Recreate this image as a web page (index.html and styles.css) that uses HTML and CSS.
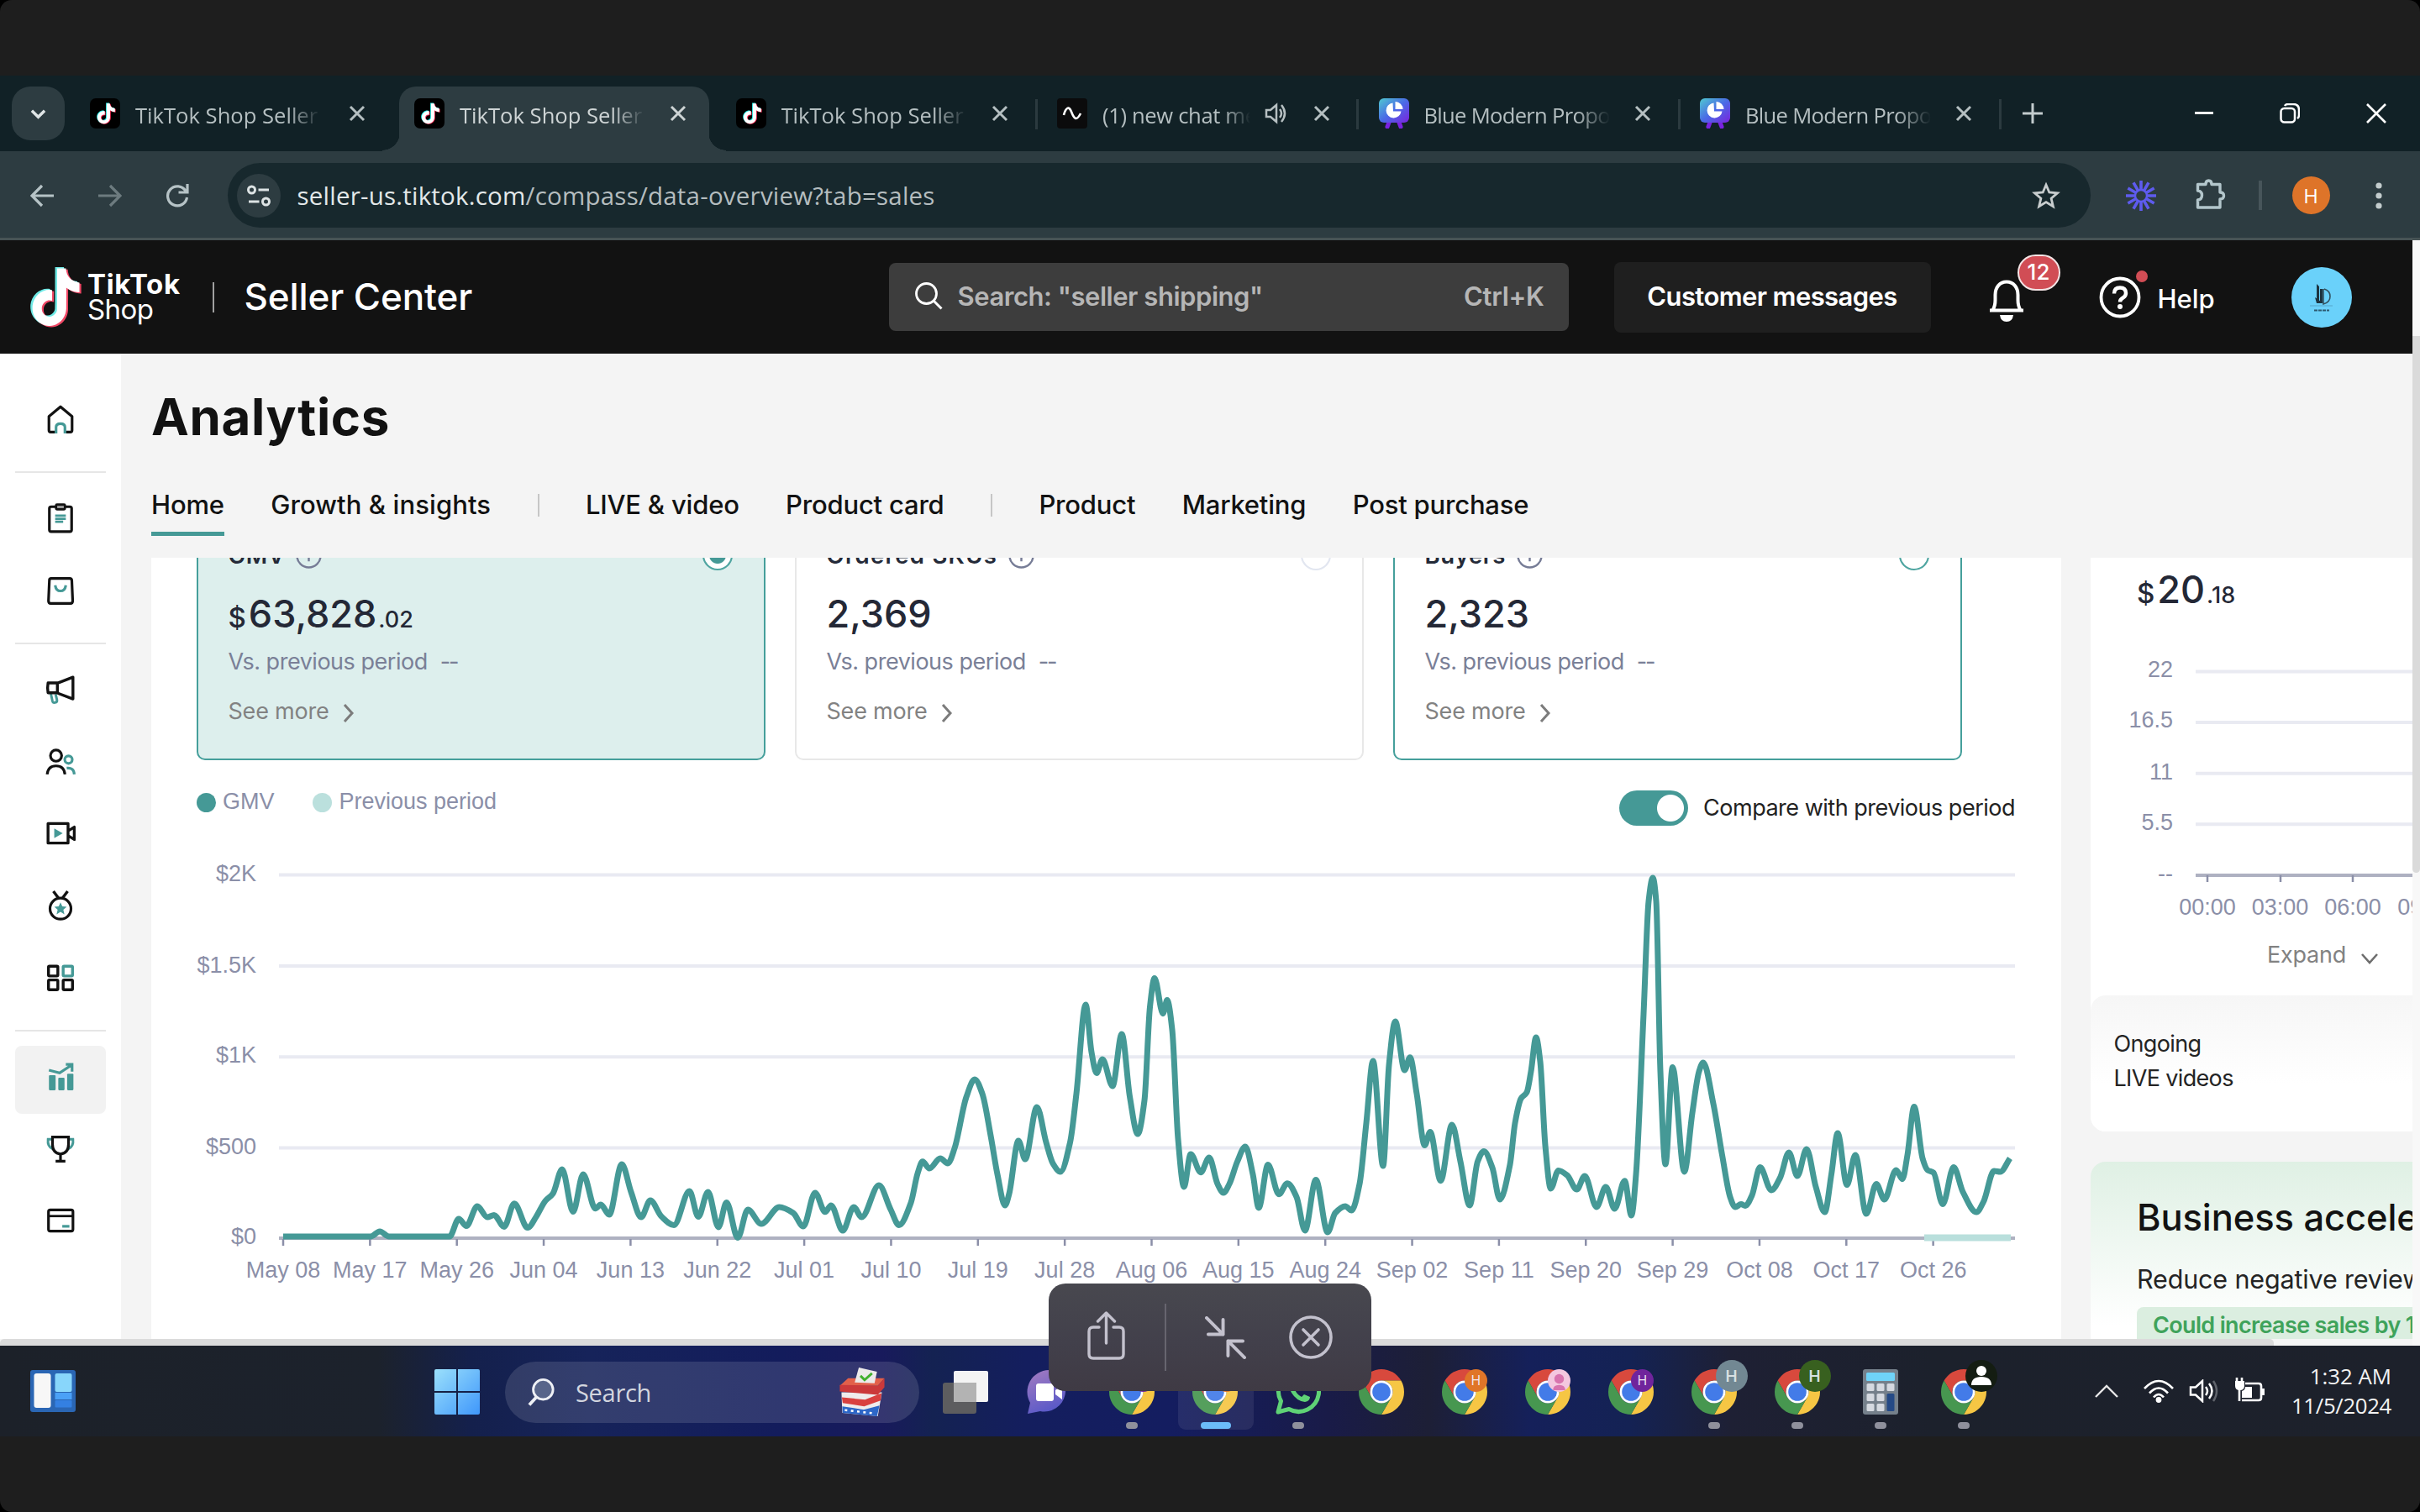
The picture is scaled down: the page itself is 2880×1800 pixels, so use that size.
FILE: index.html
```html
<!DOCTYPE html>
<html lang="en">
<head>
<meta charset="utf-8">
<title>TikTok Shop Seller Center</title>
<link rel="stylesheet" href="styles.css">
</head>
<body>
<svg class="defs" aria-hidden="true">
  <defs>
    <path id="note" d="M12.525.02c1.31-.02 2.61-.01 3.91-.02.08 1.53.63 3.09 1.75 4.17 1.12 1.11 2.7 1.62 4.24 1.79v4.03c-1.44-.05-2.89-.35-4.2-.97-.57-.26-1.1-.59-1.62-.93-.01 2.92.01 5.84-.02 8.75-.08 1.4-.54 2.79-1.35 3.94-1.31 1.92-3.58 3.17-5.91 3.21-1.43.08-2.86-.31-4.08-1.03-2.02-1.19-3.44-3.37-3.65-5.71-.02-.5-.03-1-.01-1.49.18-1.9 1.12-3.72 2.58-4.96 1.66-1.44 3.98-2.13 6.15-1.72.02 1.48-.04 2.96-.04 4.44-.99-.32-2.15-.23-3.02.37-.63.41-1.11 1.04-1.36 1.75-.21.51-.15 1.07-.14 1.61.24 1.64 1.82 3.02 3.5 2.87 1.12-.01 2.19-.66 2.77-1.61.19-.33.4-.67.41-1.06.1-1.79.06-3.57.07-5.36.01-4.03-.01-8.05.02-12.07z"/>
    <symbol id="fav-tiktok" viewBox="0 0 36 36"><rect width="36" height="36" rx="7" fill="#000"/><g transform="translate(6.6 5.6)"><use href="#note" fill="#25f4ee"/><use href="#note" fill="#fe2c55" x="1.600" y="1.200"/><use href="#note" fill="#fff" x=".8" y=".6"/></g></symbol>
    <linearGradient id="gc" x1="0" y1="0" x2="1" y2="1"><stop offset="0" stop-color="#4fc9d0"/><stop offset=".5" stop-color="#4a6be6"/><stop offset="1" stop-color="#7b22dd"/></linearGradient>
    <symbol id="fav-canva" viewBox="0 0 36 36"><path d="M10 34l3-8M26 34l-3-8" stroke="#7a22e0" stroke-width="5" stroke-linecap="round"/><rect width="36" height="29" rx="6" fill="url(#gc)"/><path d="M16.500 5.500A9 9 0 1 0 26.500 15.500H17z" fill="#fff"/><path d="M19.500 4A9 9 0 0 1 28.500 13H19.500z" fill="#fff"/></symbol>
    <symbol id="x" viewBox="0 0 20 20"><path d="M2 2l16 16M18 2L2 18" stroke="currentColor" stroke-width="3"/></symbol>
    <symbol id="chrome" viewBox="0 0 48 48"><path fill="#d8493d" d="M24 12H44.780A24 24 0 0 0 3.220 12L13.600 30A12 12 0 0 1 24 12z"/><path fill="#f6c644" d="M34.390 30L24 48A24 24 0 0 0 44.780 12H24A12 12 0 0 1 34.390 30z"/><path fill="#479750" d="M13.600 30L3.220 12A24 24 0 0 0 24 48L34.390 30A12 12 0 0 1 13.600 30z"/><circle cx="24" cy="24" r="12" fill="#fff"/><circle cx="24" cy="24" r="9.600" fill="#437be8"/></symbol>
    <symbol id="info" viewBox="0 0 32 32"><circle cx="16" cy="16" r="14.500" fill="none" stroke="#767c96" stroke-width="2.500"/><path d="M16 8v3.500M16 14v9" stroke="#767c96" stroke-width="2.500"/></symbol>
    <symbol id="more" viewBox="0 0 14 24"><path d="M2 2l9 10-9 10" fill="none" stroke="#7c7c7c" stroke-width="3"/></symbol>
  </defs>
</svg>
<div class="frame">
  <div class="browser">
    <div class="tabstrip">
      <button class="tab-search"><svg viewBox="0 0 20 12" width="19" height="13"><path d="M2 2l8 8 8-8" fill="none" stroke="#dfe5e6" stroke-width="3.600"/></svg></button>
      <div class="tab first"><svg class="fav"><use href="#fav-tiktok"/></svg><span class="title">TikTok Shop Seller C</span><svg class="close"><use href="#x"/></svg></div>
      <div class="tab active"><svg class="fav"><use href="#fav-tiktok"/></svg><span class="title">TikTok Shop Seller</span><svg class="close"><use href="#x"/></svg></div>
      <div class="tab"><svg class="fav"><use href="#fav-tiktok"/></svg><span class="title">TikTok Shop Seller</span><svg class="close"><use href="#x"/></svg><i class="sep"></i></div>
      <div class="tab"><svg class="fav" viewBox="0 0 36 36"><rect width="36" height="36" rx="4" fill="#0b0b0c"/><path d="M8 20c2-8 6-12 9-4s6 12 11 2" fill="none" stroke="#fff" stroke-width="2.600"/></svg><span class="title short">(1) new chat mes</span><svg class="sound" viewBox="0 0 28 26"><path d="M2 9h5l7-6v20l-7-6H2zM18 8q4 5 0 10M20 3q8 10 0 20" fill="none" stroke="#b6bfc1" stroke-width="2.500"/></svg><svg class="close"><use href="#x"/></svg><i class="sep"></i></div>
      <div class="tab"><svg class="fav"><use href="#fav-canva"/></svg><span class="title canva">Blue Modern Propos</span><svg class="close"><use href="#x"/></svg><i class="sep"></i></div>
      <div class="tab"><svg class="fav"><use href="#fav-canva"/></svg><span class="title canva">Blue Modern Propos</span><svg class="close"><use href="#x"/></svg><i class="sep"></i></div>
      <svg class="newtab" viewBox="0 0 24 24"><path d="M12 0v24M0 12h24" stroke="#c3cccd" stroke-width="3"/></svg>
      <div class="window-controls">
        <svg viewBox="0 0 24 24"><path d="M1 11.500h22" stroke="#fff" stroke-width="3"/></svg>
        <svg viewBox="0 0 24 24"><rect x="1.500" y="6" width="16.500" height="16.500" rx="4" fill="none" stroke="#fff" stroke-width="2.500"/><path d="M6 3q1-2 4-2h6q7 0 7 7v6q0 3-2 4" fill="none" stroke="#fff" stroke-width="2.500"/></svg>
        <svg viewBox="0 0 24 24"><path d="M1 1l22 22M23 1L1 23" stroke="#fff" stroke-width="2.600"/></svg>
      </div>
    </div>
    <div class="toolbar">
      <svg class="nav-ico" viewBox="0 0 28 28"><path d="M28 14H3M14 2L2 14l12 12" fill="none" stroke="#b6c3c6" stroke-width="3.200"/></svg>
      <svg class="nav-ico" viewBox="0 0 28 28"><path d="M0 14h25M14 2l12 12-12 12" fill="none" stroke="#6d7b7f" stroke-width="3.200"/></svg>
      <svg class="nav-ico" viewBox="0 0 28 28"><path d="M24 8.500A11.500 11.500 0 1 0 25.500 16M26 0v10H15.500" fill="none" stroke="#b6c3c6" stroke-width="3.200"/></svg>
      <div class="omnibox">
        <span class="site-info"><svg viewBox="0 0 28 28" width="28" height="28"><g fill="none" stroke="#dde3e4" stroke-width="3"><circle cx="5.500" cy="7" r="4"/><path d="M13.500 7H26"/><circle cx="22.500" cy="21" r="4"/><path d="M2 21h12.500"/></g></svg></span>
        <span class="url">seller-us.tiktok.com<span class="path">/compass/data-overview?tab=sales</span></span>
        <svg class="star" viewBox="0 0 34 34"><path d="M17 4l3.800 9 9.700.8-7.400 6.400 2.300 9.500L17 24.600l-8.400 5.100 2.300-9.500-7.400-6.400 9.700-.8z" fill="none" stroke="#c8cdce" stroke-width="2.800"/></svg>
      </div>
      <svg class="burst" viewBox="-18 -18 36 36"><g stroke="#5e5bee" stroke-width="3.600"><path d="M0-18V18M-18 0H18M-9-15.600L9 15.600M9-15.600L-9 15.600M-15.600-9L15.600 9M15.600-9L-15.600 9"/></g><circle r="7" fill="#2d3c41" stroke="#5e5bee" stroke-width="2.400"/></svg>
      <svg class="puzzle" viewBox="0 0 38 38"><path d="M3.500 7.500h9.500q0-4.500 3.500-4.500t3.500 4.500h10v9.500q4.500 0 4.500 4t-4.500 4v10H3.500v-9q5-.5 5-5.500t-5-5.500z" fill="none" stroke="#b3c6cb" stroke-width="3.400" stroke-linejoin="round"/></svg>
      <i class="tb-sep"></i>
      <span class="profile">H</span>
      <svg class="dots" viewBox="0 0 8 32"><g fill="#c3cccd"><circle cx="4" cy="4" r="3.600"/><circle cx="4" cy="16" r="3.600"/><circle cx="4" cy="28" r="3.600"/></g></svg>
    </div>
    <div class="page">
      <div class="viewport">
        <header class="topbar">
          <svg class="tt-logo" viewBox="0 0 61 71"><g transform="translate(-4 0) scale(2.680 2.860)"><use href="#note" fill="#6ee9e5"/><use href="#note" fill="#f04866" x="1.700" y="1"/><use href="#note" fill="#fff" x=".9" y=".5"/></g></svg>
          <div class="tt-word"><b>TikTok</b><span>Shop</span></div>
          <i class="brand-sep"></i>
          <span class="brand">Seller Center</span>
          <div class="search">
            <svg viewBox="0 0 34 34" width="34" height="34"><circle cx="14.500" cy="14.500" r="12" fill="none" stroke="#fff" stroke-width="2.800"/><path d="M23 23l9.500 9.500" stroke="#fff" stroke-width="3"/></svg>
            <span class="ph">Search: "seller shipping"</span><span class="kbd">Ctrl+K</span>
          </div>
          <span class="messages">Customer messages</span>
          <div class="bell"><svg viewBox="0 0 46 52" width="46" height="52"><path d="M3 37.500h40M6.500 37c2-3 3-6 3-12v-6c0-9 5.500-15.500 13.500-15.500S36.500 10 36.500 19v6c0 6 1 9 3 12" fill="none" stroke="#fff" stroke-width="4"/><path d="M15 43h16q-1 8-8 8t-8-8z" fill="#fff"/></svg><span class="badge">12</span></div>
          <div class="help"><svg viewBox="0 0 50 50" width="50" height="50"><circle cx="25" cy="25" r="22.500" fill="none" stroke="#fff" stroke-width="3.800"/><path d="M18 20.500q0-7 7-7t7 6.500q0 3.500-3.500 5.500-3.500 2-3.500 5" fill="none" stroke="#fff" stroke-width="4.400"/><circle cx="25" cy="36" r="3" fill="#fff"/></svg><i class="reddot"></i><span>Help</span></div>
          <svg class="avatar" viewBox="0 0 72 72"><circle cx="36" cy="36" r="36" fill="#6ad1fa"/><path d="M30 20l3 3v20l-3-2zM34 26h3v16h-3zM28 36l10 7-8 0z" fill="#1d3440"/><path d="M39 26q7 2 7 9t-8 9V26" fill="none" stroke="#33515f" stroke-width="1.600"/><path d="M22 46h27" stroke="#5aaed2" stroke-width="1.200"/><path d="M27 51.500h18" stroke="#2c5a70" stroke-width="1.800" stroke-dasharray="4 1"/></svg>
        </header>
        <div class="body">
          <aside class="sidebar">
            <div class="item home"><svg viewBox="0 0 34 34"><path d="M4 14v15.500q0 2 2 2h22q2 0 2-2V14L17 3z" fill="none" stroke="#121212" stroke-width="3" stroke-linejoin="round"/><path d="M12 33v-7q0-4 5-4t5 4v7" fill="#fff" stroke="#459996" stroke-width="3"/></svg></div>
            <hr>
            <div class="item"><svg viewBox="0 0 34 34"><rect x="4.500" y="4" width="25" height="28" rx="2" fill="none" stroke="#121212" stroke-width="3"/><rect x="12" y="1.500" width="10" height="5.500" rx="1" fill="#9a9a9a" stroke="#121212" stroke-width="2.600"/><path d="M11 14h12M11 17.500h12M11 21h9" stroke="#459996" stroke-width="2.600"/></svg></div>
            <div class="item"><svg viewBox="0 0 34 34"><path d="M6.500 3.500h21q2 0 2.200 2l1 23q0 3-2.500 3H6q-2.500 0-2.500-3l1-23q0-2 2-2z" fill="none" stroke="#121212" stroke-width="3"/><path d="M11 11q1 6.500 6 6.500t6-6.500" fill="none" stroke="#459996" stroke-width="3"/></svg></div>
            <hr>
            <div class="item"><svg viewBox="0 0 34 34"><path d="M6 21l2 9q.5 2 3 1.500t2-3L11.500 22" fill="none" stroke="#459996" stroke-width="2.800"/><path d="M3 9.500h10.500v11H3q-1-5.500 0-11zM14 9.500L31 3v24.500L14 21" fill="none" stroke="#121212" stroke-width="3.200" stroke-linejoin="round"/></svg></div>
            <div class="item"><svg viewBox="0 0 34 34"><g fill="none" stroke-width="3"><circle cx="26" cy="14.500" r="4.200" stroke="#459996"/><path d="M24 24q8-1 8.500 7" stroke="#459996"/><circle cx="12" cy="10" r="6.300" stroke="#121212"/><path d="M2 31q1-9.500 10-9.500T22 31" stroke="#121212"/></g></svg></div>
            <div class="item"><svg viewBox="0 0 34 34"><path d="M3 6h22.500v22H3zM26 14l6.500-4v14L26 20" fill="none" stroke="#121212" stroke-width="3.200" stroke-linejoin="round"/><path d="M10 11.500l9.500 5.500-9.500 5.500z" fill="#459996"/></svg></div>
            <div class="item"><svg viewBox="0 0 34 34"><path d="M9 1l6 8M25 1l-6 8" stroke="#121212" stroke-width="3.200"/><circle cx="17" cy="20.500" r="11.800" fill="none" stroke="#121212" stroke-width="3"/><path d="M17 13.500l2 4.500 5 .5-3.800 3.300 1.200 5-4.400-2.600-4.400 2.600 1.200-5-3.800-3.300 5-.5z" fill="#459996"/></svg></div>
            <div class="item"><svg viewBox="0 0 34 34"><g fill="none" stroke="#121212" stroke-width="3.200"><rect x="3.500" y="4" width="10.500" height="11" rx="1"/><rect x="3.500" y="19.500" width="10.500" height="11" rx="1"/><rect x="20" y="19.500" width="10.500" height="11" rx="1"/><rect x="20" y="4" width="10.500" height="11" rx="1" stroke="#459996"/></g></svg></div>
            <hr>
            <div class="item current"><svg viewBox="0 0 34 34"><g fill="#459996"><rect x="4" y="15" width="7.500" height="17" rx="1"/><rect x="14.500" y="18" width="7" height="14" rx="1"/><rect x="24.500" y="13.500" width="7" height="18.500" rx="1"/></g><path d="M4 9.500l12 3L29 4M23 3h7v8" fill="none" stroke="#459996" stroke-width="3"/></svg></div>
            <div class="item"><svg viewBox="0 0 34 34"><path d="M8 6H3q-1 8 5.500 11M26 6h5q1 8-5.500 11" fill="none" stroke="#459996" stroke-width="2.800"/><path d="M8 3.500h18v8q0 10-9 11-9-1-9-11zM17 22.500V30M11.500 30.500h11" fill="none" stroke="#121212" stroke-width="3"/></svg></div>
            <div class="item"><svg viewBox="0 0 34 34"><rect x="3.500" y="5" width="27.500" height="24" rx="2" fill="none" stroke="#121212" stroke-width="3"/><path d="M3 12h28" stroke="#121212" stroke-width="2.600"/><path d="M19 23.500h8" stroke="#459996" stroke-width="3"/></svg></div>
          </aside>
          <main class="main">
            <div class="head">
              <h1>Analytics</h1>
              <nav class="subnav"><a class="on">Home</a><a class="wide">Growth &amp; insights</a><i></i><a>LIVE &amp; video</a><a>Product card</a><i></i><a>Product</a><a>Marketing</a><a>Post purchase</a></nav>
            </div>
            <div class="content">
              <section class="panel">
                <div class="cards">
                  <div class="card selected"><div class="c-title">GMV <svg class="info"><use href="#info"/></svg><b class="radio checked"></b></div><div class="c-value"><span class="cur">$</span>63,828<span class="dec">.02</span></div><div class="c-vs">Vs. previous period<span>--</span></div><div class="c-more">See more<svg><use href="#more"/></svg></div></div>
                  <div class="card"><div class="c-title loose">Ordered SKUs <svg class="info"><use href="#info"/></svg><b class="radio muted"></b></div><div class="c-value">2,369</div><div class="c-vs">Vs. previous period<span>--</span></div><div class="c-more">See more<svg><use href="#more"/></svg></div></div>
                  <div class="card outlined"><div class="c-title">Buyers <svg class="info"><use href="#info"/></svg><b class="radio"></b></div><div class="c-value">2,323</div><div class="c-vs">Vs. previous period<span>--</span></div><div class="c-more">See more<svg><use href="#more"/></svg></div></div>
                </div>
                <div class="legend-row">
                  <div class="legend"><i class="gmv"></i><span>GMV</span><i class="prev"></i><span>Previous period</span></div>
                  <div class="compare"><span class="toggle"></span><span>Compare with previous period</span></div>
                </div>
                <svg class="chart" viewBox="180 989 2273 605">
                  <g stroke="#e9eaf2" stroke-width="4"><path d="M332 1041.500H2398M332 1150H2398M332 1258.300H2398M332 1366.500H2398"/></g>
                  <path d="M332 1474H2398" stroke="#aeb1c1" stroke-width="4"/>
                  <g id="ticks" stroke="#8b8fa8" stroke-width="2.500"></g>
                  <g class="axis y"><text x="305" y="1049">$2K</text><text x="305" y="1158">$1.5K</text><text x="305" y="1265">$1K</text><text x="305" y="1373.500">$500</text><text x="305" y="1481">$0</text></g>
                  <g class="axis x" id="days"></g>
                  <path id="gmv-line" fill="none" stroke="#459996" stroke-width="7" stroke-linejoin="round"/>
                  <path d="M2290 1473.500H2393" stroke="#b9dfdc" stroke-width="8"/>
                </svg>
              </section>
              <section class="side">
                <div class="live">
                  <div class="c-value"><span class="cur">$</span>20<span class="dec">.18</span></div>
                  <svg class="mini" viewBox="2488 760 383 340">
                    <path d="M2613 799.500H2871M2613 860H2871M2613 920.700H2871M2613 981.300H2871" stroke="#e9eaf2" stroke-width="4"/>
                    <path d="M2613 1042H2871" stroke="#aeb1c1" stroke-width="4"/>
                    <path d="M2627 1042v8M2714 1042v8M2800 1042v8" stroke="#8b8fa8" stroke-width="2.500"/>
                    <g class="axis y"><text x="2586" y="806">22</text><text x="2586" y="866">16.5</text><text x="2586" y="928">11</text><text x="2586" y="988">5.5</text><text x="2586" y="1049">--</text></g>
                    <g class="axis x"><text x="2627" y="1089">00:00</text><text x="2713.500" y="1089">03:00</text><text x="2800" y="1089">06:00</text><text x="2887" y="1089">09:00</text></g>
                  </svg>
                  <div class="expand">Expand<svg viewBox="0 0 22 14"><path d="M2 2l9 10 9-10" fill="none" stroke="#6e6e6e" stroke-width="2.600"/></svg></div>
                  <div class="ongoing">Ongoing<br>LIVE videos</div>
                </div>
                <div class="accel">
                  <h2>Business accelerator</h2>
                  <p>Reduce negative reviews</p>
                  <span class="tag">Could increase sales by 1%</span>
                </div>
              </section>
            </div>
          </main>
        </div>
        <div class="hscroll"><i></i></div>
      </div>
      <div class="vscroll"><i></i></div>
    </div>
    <footer class="taskbar">
      <svg class="widgets" viewBox="0 0 54 50"><rect width="54" height="50" rx="3" fill="#2a66b4"/><rect x="4.500" y="4" width="20" height="41" rx="3" fill="#f7f7f7"/><rect x="29.500" y="4" width="20" height="22" rx="2" fill="#88d6fb"/><rect x="29.500" y="27" width="20" height="8" fill="#4ba1f7"/><rect x="29.500" y="36" width="20" height="8.500" rx="1" fill="#3480e2"/></svg>
      <svg class="start" viewBox="0 0 54 54"><defs><linearGradient id="gw" x1="0" y1="0" x2="1" y2="1"><stop offset="0" stop-color="#9be0fb"/><stop offset="1" stop-color="#3f97fb"/></linearGradient></defs><path fill="url(#gw)" d="M2 0h24v26H0V2q0-2 2-2zM28 0h24q2 0 2 2v24H28zM0 28h26v26H2q-2 0-2-2zM28 28h26v24q0 2-2 2H28z"/></svg>
      <div class="tb-search"><svg class="mag" viewBox="0 0 34 36"><circle cx="19.500" cy="14.500" r="12.500" fill="#58658a" stroke="#eef0f5" stroke-width="3"/><path d="M11 24L2 34" stroke="#eef0f5" stroke-width="4"/></svg><span>Search</span>
        <svg class="ballot" viewBox="0 0 54 60"><path d="M2 30h49l-5 29L3 55z" fill="#efecec"/><path d="M2.500 36l28 3 20-8-1 9-20 7-26-4z" fill="#d9403f"/><path d="M3 47l26 4 19-5-3 13L3.500 55z" fill="#2d67c8"/><path d="M6 51.500l35 4" stroke="#fff" stroke-width="2.500" stroke-dasharray="3 4.500"/><path d="M10 13h44l-8 9H0z" fill="#e2604a"/><path d="M0 21l46 1 8-9v11l-8 9-46-4z" fill="#cb393a"/><path d="M23 0l22 5-3 14-24-1z" fill="#eceaea"/><path d="M25 10l5 5 9-8" fill="none" stroke="#41b02f" stroke-width="3"/></svg></div>
      <div class="apps">
        <div class="app"><svg viewBox="0 0 54 54"><rect x="0" y="16" width="40" height="37" rx="3" fill="#5d5d5f"/><rect x="13" y="2" width="41" height="37" rx="2" fill="#f4f4f4"/><rect x="13" y="16" width="27" height="23" fill="#b3b3b3"/></svg></div>
        <div class="app"><svg viewBox="0 0 54 54"><defs><linearGradient id="gch" x1="0" y1="0" x2=".4" y2="1"><stop offset="0" stop-color="#a57cc0"/><stop offset="1" stop-color="#5b5ac8"/></linearGradient></defs><path d="M27 1a25 25 0 1 1-10 49L2 53l3-13A26 26 0 0 1 27 1z" fill="url(#gch)"/><rect x="12" y="17" width="21" height="21" rx="3" fill="#fff"/><path d="M35 25l8-6v17l-8-6z" fill="#fff"/></svg></div>
        <div class="app open"><svg><use href="#chrome"/></svg><b class="acct purple">H</b></div>
        <div class="app open focus"><svg><use href="#chrome"/></svg><b class="acct orange">H</b></div>
        <div class="app open"><svg viewBox="0 0 54 54"><path d="M3 51l3.500-13A24 24 0 1 1 16 47.500z" fill="none" stroke="#5fd276" stroke-width="5" stroke-linejoin="round"/><path d="M19 14q-6 4 0 14t16 11q6-1 6-6l-7-3-3 3q-6-3-8-9l2-3-3-7z" fill="#5fd276"/></svg></div>
        <div class="app"><svg><use href="#chrome"/></svg></div>
        <div class="app"><svg><use href="#chrome"/></svg><b class="acct orange">H</b></div>
        <div class="app"><svg><use href="#chrome"/></svg><b class="acct pink"><svg viewBox="0 0 26 26"><circle cx="13" cy="11" r="5.500" fill="#d873ae"/><path d="M6 24q0-6 7-6t7 6z" fill="#d873ae"/></svg></b></div>
        <div class="app"><svg><use href="#chrome"/></svg><b class="acct purple">H</b></div>
        <div class="app open"><svg><use href="#chrome"/></svg><b class="acct big grey">H</b></div>
        <div class="app open"><svg><use href="#chrome"/></svg><b class="acct big green">H</b></div>
        <div class="app open"><svg viewBox="0 0 54 54"><rect x="6" y="0" width="42" height="54" rx="3" fill="#75808b"/><rect x="10" y="4" width="34" height="10" rx="1.500" fill="#6fd3f8"/><g fill="#d5d9e0"><rect x="10.500" y="17" width="9" height="9" rx="1.500"/><rect x="22.500" y="17" width="9" height="9" rx="1.500"/><rect x="34.500" y="17" width="9" height="9" rx="1.500"/><rect x="10.500" y="29" width="9" height="9" rx="1.500"/><rect x="22.500" y="29" width="9" height="9" rx="1.500"/><rect x="10.500" y="41" width="9" height="9" rx="1.500"/><rect x="22.500" y="41" width="9" height="9" rx="1.500"/></g><rect x="34.500" y="29" width="9" height="21" rx="1.500" fill="#254a86"/></svg></div>
        <div class="app open"><svg><use href="#chrome"/></svg><b class="acct big black"><svg viewBox="0 0 38 38"><circle cx="19" cy="13" r="6" fill="#fff"/><path d="M7 30q0-10 12-10t12 10z" fill="#fff"/></svg></b></div>
      </div>
      <div class="tray">
        <svg viewBox="0 0 28 16" width="28" height="16"><path d="M1 15L14 2l13 13" fill="none" stroke="#e6e6e6" stroke-width="2.400"/></svg>
        <svg class="wifi" viewBox="0 0 38 28" width="38" height="28"><g fill="none" stroke="#fff" stroke-width="2.600"><path d="M2 11q17-18 34 0M8 16.500q11-12 22 0M13 21.500q6-7 12 0"/></g><circle cx="19" cy="24.500" r="3.400" fill="#fff"/></svg>
        <svg class="vol" viewBox="0 0 38 28" width="38" height="28"><g fill="none" stroke="#fff" stroke-width="2.500"><path d="M2 9.500h6L16 2v24l-8-7.500H2z"/><path d="M20 9q4 5 0 10M24 5q7 9 0 18"/><path d="M29 2q8 12 0 24" stroke="#5f636b"/></g></svg>
        <svg class="batt" viewBox="0 0 38 32" width="38" height="32"><path d="M13 8h16q3 0 3 3v14q0 3-3 3H9" fill="none" stroke="#fff" stroke-width="2.600"/><path d="M32 14h4v8h-4zM13 12h8v13h-12v-8q4-1 4-5z" fill="#fff"/><path d="M3 1v6M9 1v6M6 15v14" stroke="#fff" stroke-width="2.600"/><path d="M1 5h11v6q0 5-5.500 5T1 11z" fill="#fff"/></svg>
        <div class="clock"><span>1:32 AM</span><span class="date">11/5/2024</span></div>
      </div>
    </footer>
    <div class="share-hud">
      <svg class="s1" viewBox="0 0 46 58"><path d="M14 19H7q-5 0-5 5v27q0 5 5 5h31q5 0 5-5V24q0-5-5-5h-7M22.500 38V3M12.500 12L22.500 2l10 10" fill="none" stroke="#c3c1cd" stroke-width="3.400" stroke-linecap="round" stroke-linejoin="round"/></svg>
      <i></i>
      <svg class="s2" viewBox="0 0 50 52"><path d="M2 2l20 20M22 4v18H4M48 50L28 30M28 48V30h18" fill="none" stroke="#c3c1cd" stroke-width="4" stroke-linecap="round" stroke-linejoin="round"/></svg>
      <svg class="s3" viewBox="0 0 52 52"><circle cx="26" cy="26" r="24" fill="none" stroke="#c3c1cd" stroke-width="3.600"/><path d="M17 17l18 18M35 17L17 35" stroke="#c3c1cd" stroke-width="3.600" stroke-linecap="round"/></svg>
    </div>
  </div>
</div>
<script src="chart.js"></script>
</body>
</html>
```
FILE: styles.css
```css
* { box-sizing: border-box; }
body { margin: 0; background: #000; }
.defs { position: absolute; width: 0; height: 0; }
svg { display: block; flex: none; }
i { display: block; flex: none; }
.frame { width: 2880px; height: 1800px; padding: 90px 0; overflow: hidden; background: #1e1e1e; border-radius: 14px; font-family: Inter, "Liberation Sans", sans-serif; }
.browser { position: relative; height: 1620px; display: flex; flex-direction: column; }

/* tab strip */
.tabstrip { height: 90px; display: flex; background: #112126; font-family: "Open Sans", "Noto Sans", sans-serif; }
.tab-search { width: 63px; height: 64px; margin: 13px 12px 0 14px; padding: 0; border: 0; border-radius: 22px; background: #2d3c41; display: grid; place-items: center; flex: none; }
.tab { position: relative; width: 382.5px; height: 77px; margin-top: 13px; padding: 0 0 13px 18px; display: flex; align-items: center; flex: none; color: #b5bfc1; }
.tab.first { width: 386px; }
.tab.first .close { margin-left: 33px; }
.tab.active { width: 369px; margin-right: 13.500px; background: #2d3c41; border-radius: 20px 20px 0 0; color: #ced4d5; }
.tab.active::before, .tab.active::after { content: ""; position: absolute; bottom: 0; width: 20px; height: 22px; }
.tab.active::before { left: -20px; background: radial-gradient(circle at 0 0, transparent 20.500px, #2d3c41 21px); }
.tab.active::after { right: -20px; background: radial-gradient(circle at 100% 0, transparent 20.500px, #2d3c41 21px); }
.fav { width: 36px; height: 36px; }
.title { width: 221px; margin-left: 18px; padding-top: 5px; font-size: 25.600px; line-height: 36px; white-space: nowrap; overflow: hidden; -webkit-mask-image: linear-gradient(90deg, #000 82%, transparent); mask-image: linear-gradient(90deg, #000 82%, transparent); }
.title.canva { letter-spacing: -.7px; }
.title.short { width: 176px; letter-spacing: -.35px; }
.close { width: 20px; height: 20px; margin-left: 29px; }
.sound { width: 28px; height: 26px; margin-left: 17px; }
.sound + .close { margin-left: 30px; }
.sep { position: absolute; left: 374px; top: 15px; width: 3px; height: 36px; background: #2b3a3f; }
.newtab { width: 24px; height: 24px; margin: 33px 0 0 19px; }
.window-controls { display: flex; gap: 78.500px; margin: 33px 0 0 180px; }
.window-controls svg { width: 24px; height: 24px; }

/* toolbar */
.toolbar { height: 106px; padding: 2px 0 0 36px; display: flex; align-items: center; background: #2d3c41; border-bottom: 3px solid #475355; }
.nav-ico { width: 28px; height: 28px; margin-right: 52.500px; }
.omnibox { width: 2217px; height: 77px; margin-left: -7px; padding: 0 36px 0 11px; border-radius: 38.500px; display: flex; align-items: center; background: #17282d; font: 29.500px/40px "Open Sans", "Noto Sans", sans-serif; }
.site-info { width: 52px; height: 52px; border-radius: 50%; background: #2d3c41; display: grid; place-items: center; }
.url { margin-left: 20px; letter-spacing: .22px; color: #e3e8e9; flex: 1; }
.url .path { color: #b5bdbf; }
.star { width: 34px; height: 34px; }
.burst { width: 36px; height: 36px; margin-left: 42px; }
.puzzle { width: 38px; height: 38px; margin: -4px 0 0 46px; }
.tb-sep { width: 4px; height: 35px; margin-left: 38px; background: #47555a; }
.profile { width: 45px; height: 45px; margin: 0 0 0 36px; border-radius: 50%; background: #de7429; color: #fff; font: 24px/45px "Open Sans", sans-serif; text-align: center; }
.dots { width: 8px; height: 32px; margin-left: 54px; }

/* page shell */
.page { height: 1316px; display: flex; }
.viewport { width: 2871px; display: flex; flex-direction: column; }
.vscroll { width: 9px; background: #f8f8f8; padding-top: 114px; }
.vscroll i { height: 639px; background: #dadada; border-radius: 0 0 5px 5px; }
.hscroll { height: 8px; background: #f5f5f5; }
.hscroll i { width: 2706px; height: 8px; background: #dbdbdb; border-radius: 5px 5px 0 0; }

/* seller center header */
.topbar { height: 135px; padding-left: 36px; display: flex; align-items: center; background: #121212; color: #fff; flex: none; }
.tt-logo { width: 61px; height: 71px; overflow: visible; }
.tt-word { width: 115px; margin: -2px 0 0 7px; line-height: 30px; font-size: 33px; }
.tt-word b, .tt-word span { display: block; }
.tt-word b { letter-spacing: .6px; }
.tt-word span { letter-spacing: -.6px; }
.brand-sep { width: 2px; height: 36px; margin-left: 33.500px; background: #a0a0a0; }
.brand { width: 767px; margin-left: 36px; padding-bottom: 2px; font-size: 44px; font-weight: 550; letter-spacing: -.1px; }
.search { width: 809px; height: 81px; padding: 0 29px 2px 30px; display: flex; align-items: center; background: #3d3d3d; border-radius: 8px; color: #b6b6b6; font-size: 31px; font-weight: 600; }
.search svg { margin-top: -2px; }
.search .ph { flex: 1; margin-left: 18px; letter-spacing: -.45px; }
.search .kbd { letter-spacing: -.3px; }
.messages { width: 377px; margin-left: 54px; padding-bottom: 2px; line-height: 82px; border-radius: 8px; background: #1f1f1f; text-align: center; font-size: 31px; font-weight: 600; letter-spacing: -.6px; }
.bell { position: relative; margin: 9px 0 0 67px; }
.badge { position: absolute; left: 36px; top: -29px; width: 51px; height: 43px; border: 2.500px solid #f3e3e4; border-radius: 22px; background: #d14d55; text-align: center; font: 500 26px/37px Inter, sans-serif; }
.help { position: relative; margin-left: 87px; display: flex; align-items: center; font-size: 31px; font-weight: 550; }
.help span { margin: 4px 0 0 20px; }
.reddot { position: absolute; left: 44px; top: -7px; width: 14px; height: 14px; border-radius: 50%; background: #d14d55; }
.avatar { width: 72px; height: 72px; margin-left: auto; margin-right: 72px; }

/* sidebar */
.body { display: flex; height: 1173px; }
.sidebar { width: 144px; padding: 37px 18px 0; background: #fff; display: flex; flex-direction: column; flex: none; }
.sidebar hr { width: 108px; height: 2px; margin: 17px 0 13.500px; border: 0; background: #e6e6e6; flex: none; }
.item { height: 81px; margin-bottom: 4.700px; display: grid; place-items: center; border-radius: 8px; flex: none; }
.item.home { margin-bottom: 5px; }
.item svg { width: 36px; height: 36px; }
.item.current { margin: 4px 0 .7px; padding-bottom: 7px; background: #f2f2f2; }

/* analytics */
.main { width: 2727px; background: #f4f4f4; }
.head { height: 243px; padding: 40px 0 0 36px; color: #121212; }
h1 { margin: 0; font-size: 60px; line-height: 70px; font-weight: 700; letter-spacing: .65px; }
.subnav { margin-top: 38px; display: flex; gap: 55.400px; font-size: 31px; font-weight: 550; line-height: 64px; letter-spacing: -.2px; }
.subnav a { border-bottom: 5px solid transparent; }
.subnav a.on { border-color: #459996; letter-spacing: -.2px; }
.subnav a.wide { letter-spacing: .1px; }
.subnav i { width: 2px; height: 27px; margin-top: 19px; background: #c6c6c6; }
.content { height: 930px; padding-left: 36px; display: flex; overflow: hidden; }
.panel { width: 2273px; background: #fff; flex: none; }
.cards { display: flex; gap: 35px; margin: -60px 0 0 54px; }
.card { width: 677px; height: 301px; padding: 35px 37px 0 35.500px; border: 2px solid #e8e8e8; border-radius: 10px; background: #fff; }
.card.selected { background: #ddefed; border-color: #459f9b; }
.card.outlined { border-color: #459f9b; }
.c-title { display: flex; align-items: center; line-height: 40px; font-size: 27.500px; font-weight: 600; letter-spacing: .6px; color: #242a38; }
.c-title.loose { letter-spacing: 1.300px; }
.info { width: 31px; height: 31px; margin-left: 13px; }
.radio { width: 36px; height: 36px; margin-left: auto; border: 2.500px solid #4fa5a1; border-radius: 50%; background: #fff; }
.radio.muted { border-color: #e2e6f0; }
.radio.checked { background: radial-gradient(circle, #459996 9.500px, #fff 10.500px); }
.c-value { height: 60px; margin-top: 20px; line-height: 60px; font-size: 45px; font-weight: 500; color: #242836; }
.c-value .cur { font-size: 33px; margin-right: 3px; line-height: 1; }
.c-value .dec { font-size: 27px; margin-left: 2px; line-height: 1; }
.c-vs { margin-top: 7px; line-height: 40px; font-size: 27px; letter-spacing: -.48px; color: #7a8097; }
.c-vs span { margin-left: 15px; letter-spacing: -2px; }
.c-more { margin-top: 19px; display: flex; align-items: center; line-height: 40px; font-size: 27px; letter-spacing: -.2px; color: #828282; }
.c-more svg { width: 14px; height: 24px; margin: 3px 0 0 16px; }
.legend-row { height: 54px; margin-top: 30px; padding: 0 55px 0 54px; display: flex; justify-content: space-between; align-items: center; }
.legend { display: flex; align-items: center; margin-bottom: 17px; font: 27px/36px "Liberation Sans", sans-serif; color: #8b8fa8; }
.legend i { width: 23px; height: 23px; margin: 4px 8px 0 0; border-radius: 50%; }
.legend .gmv { background: #459996; }
.legend .prev { margin-left: 45px; margin-right: 9px; background: #bbe0dd; }
.compare { display: flex; align-items: center; gap: 18px; font-size: 27px; letter-spacing: -.5px; color: #222; }
.compare span:last-child { padding-bottom: 2px; }
.toggle { width: 82px; height: 42px; border-radius: 21px; background: radial-gradient(circle at 61px 50%, #fff 15.500px, #459996 16.500px); }
.chart { width: 2273px; height: 605px; }
.axis { font: 27px "Liberation Sans", sans-serif; fill: #8b8fa8; }
.axis.y { text-anchor: end; }
.axis.x { text-anchor: middle; }

/* right column */
.side { width: 383px; margin-left: 35px; overflow: hidden; flex: none; }
.live { height: 683px; background: #fff; border-radius: 0 0 0 18px; overflow: hidden; }
.live .c-value { margin: 8px 0 28px 55px; }
.mini { width: 383px; height: 340px; }
.expand { margin: 17px 0 28px 210px; display: flex; align-items: center; line-height: 40px; font-size: 27px; letter-spacing: -.23px; color: #828282; }
.expand svg { width: 22px; height: 14px; margin: 7px 0 0 17px; }
.ongoing { height: 162px; padding: 37px 0 0 27.500px; border-radius: 18px 0 0 0; background: linear-gradient(#f6f6f6, #fff 65%); font-size: 27px; line-height: 41px; letter-spacing: -.65px; color: #242424; }
.accel { height: 300px; margin-top: 36px; padding: 38px 0 0 55px; border-radius: 18px 0 0 0; background: linear-gradient(#dff0e4, #fff 195px); white-space: nowrap; }
.accel h2 { margin: 0; font-size: 43.500px; line-height: 57px; font-weight: 500; color: #121212; letter-spacing: -.1px; }
.accel p { margin: 23px 0 0; font-size: 30.500px; line-height: 44px; letter-spacing: -.15px; color: #242424; }
.tag { display: inline-block; margin-top: 11px; padding: 0 19px 20px; border-radius: 8px; background: #dbeee0; font-size: 27px; line-height: 43px; font-weight: 600; letter-spacing: -.65px; color: #3fa35b; }

/* taskbar */
.taskbar { height: 108px; padding-left: 36px; display: flex; align-items: center; background: linear-gradient(90deg, #1c2129 0, #1c222c 450px, #14204c 560px, #16235a 700px, #131c5c 930px, #181a5c 1050px, #142252 1110px, #141e5e 1220px, #141d60 1390px, #191b48 1580px, #1d1f36 1700px, #15205a 1820px, #142254 1940px, #1e2034 2060px, #1c212c 2300px, #1d212b 100%); font-family: "Open Sans", sans-serif; flex: none; }
.widgets { width: 54px; height: 50px; }
.start { width: 54px; height: 54px; margin: 2px 0 0 427px; }
.tb-search { width: 493px; height: 73px; margin: 2px 0 0 30px; padding: 0 41px 0 27px; display: flex; align-items: center; border-radius: 37px; background: #ffffff20; color: #d3d6df; font-size: 29px; letter-spacing: -.3px; }
.mag { width: 32px; height: 35px; }
.tb-search span { flex: 1; margin-left: 25px; }
.ballot { width: 54px; height: 59px; }
.apps { display: flex; margin-left: 5.500px; }
.app { position: relative; width: 99px; height: 108px; padding-top: 28px; display: flex; justify-content: center; }
.app > svg { width: 54px; height: 54px; }
.app.open::after { content: ""; position: absolute; left: 42.500px; top: 91px; width: 14px; height: 8px; border-radius: 4px; background: #8f909c; }
.app.focus::before { content: ""; position: absolute; inset: 20px 4px 8px 5px; border-radius: 9px; background: #ffffff14; }
.app.open.focus::after { left: 32px; width: 36px; background: #6cbcf9; }
.acct { position: absolute; left: 49.500px; top: 28px; width: 27px; height: 27px; border-radius: 50%; color: #f1e9f5; text-align: center; font: 16px/27px "Open Sans", sans-serif; }
.acct svg { width: 100%; height: 100%; }
.acct.orange { background: #e07528; }
.acct.purple { background: #70249c; }
.acct.pink { background: #f4c7df; }
.acct.big { left: 51px; top: 17px; width: 38px; height: 38px; font: 600 20px/37px "Open Sans", sans-serif; color: #d8e0e2; }
.acct.grey { background: #728893; }
.acct.green { background: #38601f; }
.acct.black { background: #141d12; }
.tray { display: flex; align-items: center; margin-left: auto; padding-right: 34px; }
.wifi { margin-left: 29px; }
.vol { margin-left: 17px; }
.batt { margin: -2px 0 0 16px; }
.clock { width: 149px; text-align: right; font-size: 25.800px; line-height: 35px; color: #f2f2f2; }
.clock span { display: block; }
.clock .date { letter-spacing: -.35px; }

/* screen-share controls */
.share-hud { position: absolute; left: 1248px; top: 1438px; width: 384px; height: 128px; padding: 0 46px; display: flex; align-items: center; border-radius: 20px; background: linear-gradient(#48484f, #42404b 55%, #3f3a44); }
.share-hud i { width: 2px; height: 80px; margin: 0 46px 0 46px; background: #67656f; }
.s1 { width: 46px; height: 58px; margin-top: -4px; }
.s2 { width: 49px; height: 51px; }
.s3 { width: 52px; height: 52px; margin-left: 51px; }
```
FILE: chart.js
```js
// Daily GMV as "x,y" pairs in the chart's own coordinates.
var points = "337,1472 441,1472 452,1466 463,1472 535,1472 546,1451 555,1459.6 568,1436 580,1449 588,1446.6 600,1460.4 612,1432.7 628,1461.6 638,1448.6 649,1429.6 658,1421 669,1392 682,1442.6 694,1398 708.5,1438.7 715,1434 725,1446 740,1386 751,1419 763,1449 774,1429 787,1448 802,1458.4 820.5,1418 831,1448.6 842.6,1419 855,1461 864.6,1431.5 878,1473.5 890,1440 906,1457 927.5,1437 944,1444 956,1460 970,1420 982,1442.8 989,1435 1003,1465 1016,1437 1025.5,1449 1046,1411 1060,1440 1070,1458.5 1084,1432 1092,1397 1098,1382.7 1106,1391 1119,1379 1128,1385 1136,1367 1150,1306 1160,1285 1169,1302 1179,1352 1187,1398 1196,1435 1201,1421 1212,1358 1220,1380 1234,1318 1245,1360 1253,1385 1262,1395 1273.5,1360 1281,1302 1292,1196 1299,1252.6 1305,1277.5 1312,1261 1324,1293 1335,1231 1344.6,1306 1354,1350 1362,1310 1368.5,1199 1374,1164.6 1384,1206.7 1389,1190.6 1395,1226 1402,1356 1409,1413 1417,1374 1429,1395.7 1439,1378 1449,1409.5 1456,1420 1463,1409.5 1472.6,1382.7 1482,1365 1491,1398 1498,1438 1509,1386.5 1522,1421.7 1532,1408.7 1543,1425 1553,1465 1566,1404.5 1580,1467 1589,1444 1601,1436 1608.5,1441 1618,1409.5 1626,1337 1634,1263 1646,1388 1653,1268 1660.5,1216 1671.6,1274 1678,1258.7 1686,1302 1695.5,1363.6 1702,1347.5 1714.5,1405.7 1728,1339 1738,1382.7 1749,1435 1758.5,1382.7 1766,1370.5 1776,1390 1785,1428 1797,1386.5 1803,1337 1810,1308 1817,1300.4 1822,1275.5 1828,1235 1833,1264 1839,1363.6 1845.5,1415 1854.6,1393.4 1865,1399 1876.5,1416 1886,1400 1900,1437 1911,1413 1921.6,1439 1933.5,1405.7 1941.5,1447 1947,1398 1956,1207 1962,1073 1967,1045 1971,1073 1976,1275.5 1982,1386 1990.5,1270.6 2004.5,1395 2014,1325 2022,1275.5 2027,1265 2039,1314 2049.5,1375 2059,1425 2065,1437 2072,1433.6 2077,1435.5 2085,1423 2094.6,1389.6 2108,1417 2118.5,1402 2129,1372 2139,1400 2150,1368 2161,1413 2171.6,1443 2179.5,1398 2187,1349 2198,1410.6 2208,1375 2221,1445 2233,1409.5 2242.5,1428 2256.5,1393 2264,1403.7 2270,1375 2278,1317.6 2288,1379 2294,1393 2301,1396 2312,1433.6 2325,1389.6 2336,1419 2352,1443 2360.6,1430.5 2373,1394 2380.5,1395 2392,1379"
  .split(" ").map(function (p) { return p.split(",").map(Number); });

// Monotone cubic interpolation: smooth, without overshooting the peaks.
function smooth(p) {
  var n = p.length, d = [], m = [], i;
  for (i = 0; i < n - 1; i++) d[i] = (p[i + 1][1] - p[i][1]) / (p[i + 1][0] - p[i][0]);
  m[0] = d[0];
  m[n - 1] = d[n - 2];
  for (i = 1; i < n - 1; i++) m[i] = d[i - 1] * d[i] <= 0 ? 0 : 2 * d[i - 1] * d[i] / (d[i - 1] + d[i]);
  var path = "M" + p[0];
  for (i = 0; i < n - 1; i++) {
    var h = (p[i + 1][0] - p[i][0]) / 3;
    path += "C" + [p[i][0] + h, p[i][1] + m[i] * h, p[i + 1][0] - h, p[i + 1][1] - m[i + 1] * h, p[i + 1][0], p[i + 1][1]].join(" ");
  }
  return path;
}
document.getElementById("gmv-line").setAttribute("d", smooth(points));

var ticks = "", labels = "";
["May 08", "May 17", "May 26", "Jun 04", "Jun 13", "Jun 22", "Jul 01", "Jul 10", "Jul 19", "Jul 28", "Aug 06", "Aug 15", "Aug 24", "Sep 02", "Sep 11", "Sep 20", "Sep 29", "Oct 08", "Oct 17", "Oct 26"].forEach(function (day, i) {
  var x = 337 + i * 103.350;
  ticks += '<path d="M' + x + ' 1475v8"/>';
  labels += '<text x="' + x + '" y="1521">' + day + "</text>";
});
document.getElementById("ticks").innerHTML = ticks;
document.getElementById("days").innerHTML = labels;
```
